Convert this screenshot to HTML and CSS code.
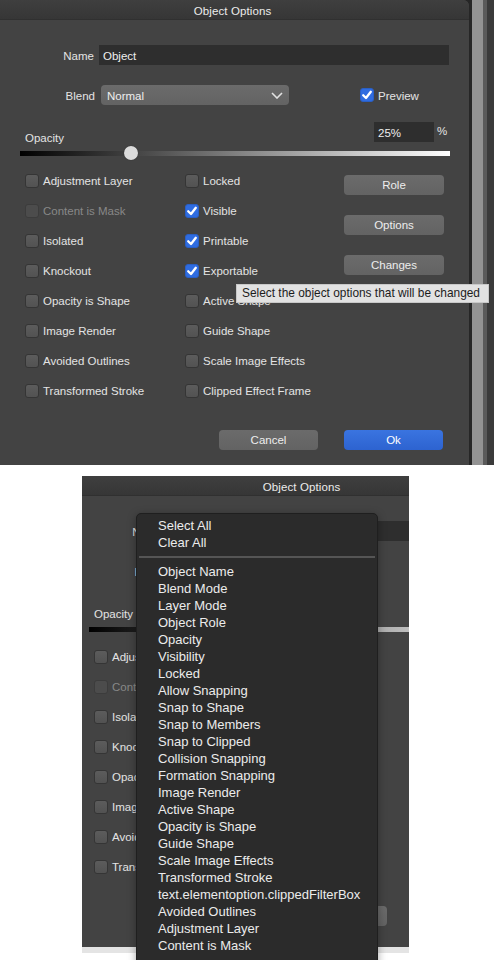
FILE: index.html
```html
<!DOCTYPE html>
<html>
<head>
<meta charset="utf-8">
<link rel="stylesheet" href="styles.css">
</head>
<body>
<div class="top">
  <div class="dialog">
    <div class="titlebar">Object Options</div>
    <div class="row name-row">
      <span class="lbl lbl-name">Name</span>
      <div class="field name-field">Object</div>
    </div>
    <div class="row blend-row">
      <span class="lbl lbl-blend">Blend</span>
      <div class="select"><span>Normal</span><svg class="chev" width="12" height="7" viewBox="0 0 12 7"><polyline points="1,1 6,6 11,1" fill="none" stroke="#e2e2e2" stroke-width="1.6"/></svg></div>
      <label class="check preview"><span class="box on"><svg width="14" height="14" viewBox="0 0 14 14"><polyline points="3.2,7.2 6,10 10.8,3.8" fill="none" stroke="#fff" stroke-width="2.3" stroke-linecap="round" stroke-linejoin="round"/></svg></span><span class="txt">Preview</span></label>
    </div>
    <div class="row opacity-row">
      <span class="lbl lbl-opacity">Opacity</span>
      <div class="field pct-field">25%</div>
      <span class="lbl pct">%</span>
    </div>
    <div class="slider"><span class="thumb" style="left:104px"></span></div>
    <div class="grid">
      <div class="col col1">
        <label class="check"><span class="box"></span><span class="txt">Adjustment Layer</span></label>
        <label class="check disabled"><span class="box"></span><span class="txt">Content is Mask</span></label>
        <label class="check"><span class="box"></span><span class="txt">Isolated</span></label>
        <label class="check"><span class="box"></span><span class="txt">Knockout</span></label>
        <label class="check"><span class="box"></span><span class="txt">Opacity is Shape</span></label>
        <label class="check"><span class="box"></span><span class="txt">Image Render</span></label>
        <label class="check"><span class="box"></span><span class="txt">Avoided Outlines</span></label>
        <label class="check"><span class="box"></span><span class="txt">Transformed Stroke</span></label>
      </div>
      <div class="col col2">
        <label class="check"><span class="box"></span><span class="txt">Locked</span></label>
        <label class="check"><span class="box on"><svg width="14" height="14" viewBox="0 0 14 14"><polyline points="3.2,7.2 6,10 10.8,3.8" fill="none" stroke="#fff" stroke-width="2.3" stroke-linecap="round" stroke-linejoin="round"/></svg></span><span class="txt">Visible</span></label>
        <label class="check"><span class="box on"><svg width="14" height="14" viewBox="0 0 14 14"><polyline points="3.2,7.2 6,10 10.8,3.8" fill="none" stroke="#fff" stroke-width="2.3" stroke-linecap="round" stroke-linejoin="round"/></svg></span><span class="txt">Printable</span></label>
        <label class="check"><span class="box on"><svg width="14" height="14" viewBox="0 0 14 14"><polyline points="3.2,7.2 6,10 10.8,3.8" fill="none" stroke="#fff" stroke-width="2.3" stroke-linecap="round" stroke-linejoin="round"/></svg></span><span class="txt">Exportable</span></label>
        <label class="check"><span class="box"></span><span class="txt">Active Shape</span></label>
        <label class="check"><span class="box"></span><span class="txt">Guide Shape</span></label>
        <label class="check"><span class="box"></span><span class="txt">Scale Image Effects</span></label>
        <label class="check"><span class="box"></span><span class="txt">Clipped Effect Frame</span></label>
      </div>
      <div class="col col3">
        <div class="btn">Role</div>
        <div class="btn">Options</div>
        <div class="btn">Changes</div>
      </div>
    </div>
    <div class="footer">
      <div class="btn wide">Cancel</div>
      <div class="btn wide primary">Ok</div>
    </div>
  </div>
  <div class="strip"></div>
  <div class="tooltip">Select the object options that will be changed</div>
</div>

<div class="second">
  <div class="crop">
    <div class="dialog shifted">
      <div class="titlebar">Object Options</div>
      <div class="row name-row">
        <span class="lbl lbl-name">Name</span>
        <div class="field name-field">Object</div>
      </div>
      <div class="row blend-row">
        <span class="lbl lbl-blend">Blend</span>
        <div class="select"><span>Normal</span><svg class="chev" width="12" height="7" viewBox="0 0 12 7"><polyline points="1,1 6,6 11,1" fill="none" stroke="#e2e2e2" stroke-width="1.6"/></svg></div>
      </div>
      <div class="row opacity-row">
        <span class="lbl lbl-opacity">Opacity</span>
        <div class="field pct-field">25%</div>
        <span class="lbl pct">%</span>
      </div>
      <div class="slider"><span class="thumb" style="left:104px"></span></div>
      <div class="grid">
        <div class="col col1">
          <label class="check"><span class="box"></span><span class="txt">Adjustment Layer</span></label>
          <label class="check disabled"><span class="box"></span><span class="txt">Content is Mask</span></label>
          <label class="check"><span class="box"></span><span class="txt">Isolated</span></label>
          <label class="check"><span class="box"></span><span class="txt">Knockout</span></label>
          <label class="check"><span class="box"></span><span class="txt">Opacity is Shape</span></label>
          <label class="check"><span class="box"></span><span class="txt">Image Render</span></label>
          <label class="check"><span class="box"></span><span class="txt">Avoided Outlines</span></label>
          <label class="check"><span class="box"></span><span class="txt">Transformed Stroke</span></label>
        </div>
      </div>
      <div class="footer">
        <div class="btn wide">Cancel</div>
        <div class="btn wide primary">Ok</div>
      </div>
    </div>
  </div>
  <div class="under"></div>
  <div class="menu">
    <div class="item">Select All</div>
    <div class="item">Clear All</div>
    <div class="sep"></div>
    <div class="item">Object Name</div>
    <div class="item">Blend Mode</div>
    <div class="item">Layer Mode</div>
    <div class="item">Object Role</div>
    <div class="item">Opacity</div>
    <div class="item">Visibility</div>
    <div class="item">Locked</div>
    <div class="item">Allow Snapping</div>
    <div class="item">Snap to Shape</div>
    <div class="item">Snap to Members</div>
    <div class="item">Snap to Clipped</div>
    <div class="item">Collision Snapping</div>
    <div class="item">Formation Snapping</div>
    <div class="item">Image Render</div>
    <div class="item">Active Shape</div>
    <div class="item">Opacity is Shape</div>
    <div class="item">Guide Shape</div>
    <div class="item">Scale Image Effects</div>
    <div class="item">Transformed Stroke</div>
    <div class="item">text.elementoption.clippedFilterBox</div>
    <div class="item">Avoided Outlines</div>
    <div class="item">Adjustment Layer</div>
    <div class="item">Content is Mask</div>
  </div>
</div>
</body>
</html>
```

FILE: styles.css
```css
html, body {
  margin: 0;
  padding: 0;
  height: 960px;
  overflow: hidden;
  background: #ffffff;
}
body {
  font-family: "Liberation Sans", Arial, sans-serif;
  font-size: 11.5px;
  color: #e3e3e3;
}
.top {
  position: relative;
  display: flex;
  height: 465px;
  width: 494px;
  overflow: hidden;
  background: #262626;
}
.dialog {
  width: 469px;
  flex: none;
  height: 480px;
  background: #434343;
  border-top-right-radius: 6px;
  display: flex;
  flex-direction: column;
}
.titlebar {
  height: 20px;
  line-height: 22px;
  box-sizing: border-box;
  background: linear-gradient(#3f3f3f, #363636);
  border-bottom: 1px solid #303030;
  border-top-right-radius: 6px;
  text-align: center;
  font-size: 11.5px;
  color: #ececec;
  letter-spacing: 0.1px;
  padding-right: 4px;
}
.strip {
  width: 25px;
  flex: none;
  background: linear-gradient(to right, #262626 0, #262626 3px, #939393 3px, #939393 14px, #5a5a5a 14px, #5a5a5a 18px, #3a3a3a 18px);
}
.row {
  display: flex;
  align-items: center;
  height: 20px;
}
.lbl {
  flex: none;
  white-space: nowrap;
  padding-top: 2px;
}
.name-row { margin-top: 25px; }
.lbl-name { width: 94px; text-align: right; }
.field {
  background: #2e2e2e;
  height: 20px;
  line-height: 22px;
  box-sizing: border-box;
  padding-left: 4px;
  color: #eeeeee;
}
.name-field { width: 350px; margin-left: 5px; }
.blend-row { margin-top: 20px; }
.lbl-blend { width: 95px; text-align: right; }
.select {
  margin-left: 6px;
  width: 188px;
  height: 20px;
  box-sizing: border-box;
  border-radius: 4px;
  background: linear-gradient(#6b6b6b, #636363);
  display: flex;
  align-items: center;
  justify-content: space-between;
  padding: 0 6px 0 6px;
  color: #eeeeee;
}
.select span { padding-top: 2px; }
.chev { display: block; }
.preview { margin-left: 71px; }
.preview .txt { padding-top: 2px; }
.opacity-row { margin-top: 17px; align-items: stretch; }
.lbl-opacity {
  width: 374px;
  box-sizing: border-box;
  padding-left: 25px;
  padding-top: 9px;
  line-height: 14px;
}
.pct-field { width: 60px; }
.pct { margin-left: 3px; line-height: 18px; padding-top: 0; }
.slider {
  position: relative;
  margin: 9px 0 0 20px;
  width: 430px;
  height: 5px;
  flex: none;
  background: linear-gradient(to right, #000000, #ffffff);
}
.thumb {
  position: absolute;
  top: -5px;
  width: 14px;
  height: 14px;
  border-radius: 50%;
  background: #dcdcdc;
  box-shadow: 0 0 1px rgba(0,0,0,0.5);
}
.grid {
  display: flex;
  margin-top: 10px;
  padding-left: 25px;
}
.col { display: flex; flex-direction: column; flex: none; }
.col1 { width: 160px; }
.col2 { width: 159px; }
.col3 { width: 100px; padding-top: 9px; gap: 20px; }
.check {
  display: flex;
  align-items: center;
  height: 30px;
  white-space: nowrap;
}
.preview.check { height: 20px; }
.box {
  width: 14px;
  height: 14px;
  box-sizing: border-box;
  border-radius: 3px;
  border: 1px solid #353535;
  background: linear-gradient(#5c5c5c, #525252);
  flex: none;
  display: block;
}
.box svg { display: block; margin: -1px; }
.box.on {
  background: #2f6ce0;
  border-color: #2a5fc4;
}
.txt { margin-left: 4px; }
.disabled .txt { color: #888888; }
.disabled .box { background: #4c4c4c; border-color: #3c3c3c; }
.btn {
  height: 20px;
  line-height: 20px;
  border-radius: 4px;
  background: linear-gradient(#6b6b6b, #636363);
  text-align: center;
  color: #ededed;
}
.footer {
  display: flex;
  gap: 26px;
  margin-top: 24px;
  padding-left: 219px;
}
.btn.wide { width: 99px; }
.btn.primary { background: linear-gradient(#3a74e0, #2d63d0); color: #ffffff; }
.tooltip {
  position: absolute;
  left: 236px;
  top: 284px;
  width: 253px;
  height: 19px;
  box-sizing: border-box;
  background: #e2e2e2;
  border: 1px solid #c8c8c8;
  color: #1c1c1c;
  font-size: 11.9px;
  line-height: 17px;
  padding-left: 5px;
  white-space: nowrap;
}
.second {
  position: relative;
  margin-top: 11px;
  width: 494px;
  height: 484px;
}
.crop {
  margin-left: 82px;
  width: 327px;
  height: 471px;
  overflow: hidden;
}
.shifted { margin-left: -13px; }
.under {
  margin-left: 82px;
  width: 327px;
  height: 6px;
  background: #e4e4e4;
}
.menu {
  position: absolute;
  left: 136px;
  top: 37px;
  width: 242px;
  height: 460px;
  box-sizing: border-box;
  background: #2b2b2b;
  border: 1px solid #1f1f1f;
  border-radius: 5px 5px 0 0;
  padding: 3px 0 0 21px;
  font-size: 13px;
  color: #ececec;
  box-shadow: 0 2px 8px rgba(0,0,0,0.35);
}
.item {
  height: 17px;
  line-height: 17px;
  white-space: nowrap;
}
.sep {
  height: 2px;
  background: #555555;
  margin: 5px 2px 5px -19px;
}
```
